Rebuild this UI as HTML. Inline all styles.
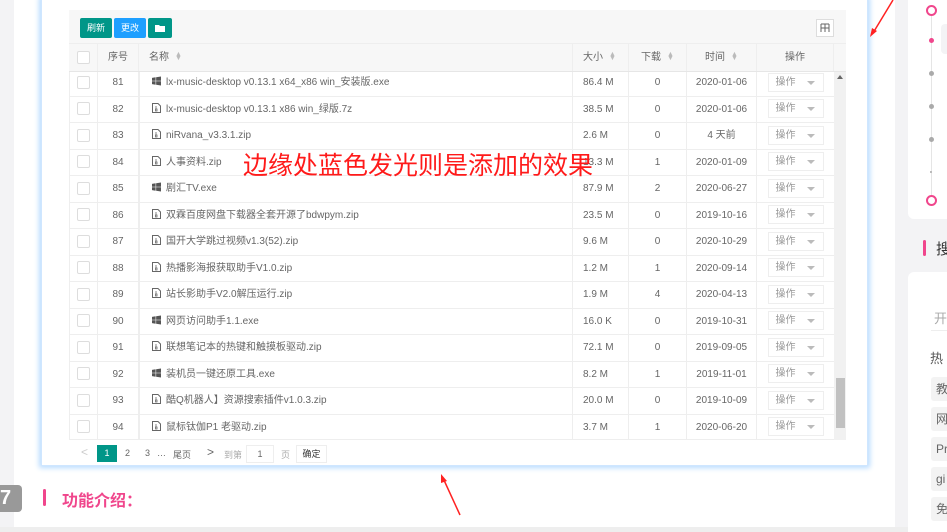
<!DOCTYPE html>
<html><head><meta charset="utf-8"><style>
*{margin:0;padding:0;box-sizing:border-box}
body{width:947px;height:532px;overflow:hidden;background:#f3f3f5;font-family:"Liberation Sans","Noto Sans CJK SC",sans-serif;position:relative;color:#666}
.abs{position:absolute}
.main{left:14px;top:0;width:881px;height:527px;background:#fff}
.frame{left:41px;top:-2px;width:827px;height:468px;background:#fff;box-shadow:0 0 5px 2px #b9dcff;border:1px solid #cfe6ff}
.tbl{left:69px;top:10px;width:777px;height:430px;background:#fff;border:1px solid #eee}
.toolbar{left:69px;top:10px;width:777px;height:34px;background:#f7f7f7;border-bottom:1px solid #eee}
.btn{position:absolute;top:8px;height:20px;color:#fff;font-size:9px;line-height:20px;text-align:center;border-radius:2px}
.hdr{left:69px;top:44px;width:777px;height:28px;background:#f7f7f7;border-bottom:1px solid #e6e6e6;font-size:10px;color:#666}
.hdr .cell{line-height:28px}
.cell{position:absolute;top:0;height:100%;border-right:1px solid #eee;white-space:nowrap;line-height:26px}
.c{text-align:center}
.sort{display:inline-block;margin-left:6px;color:#bbb;font-size:7px;line-height:4px;vertical-align:middle}
.body{left:69px;top:72px;width:765px;height:368px;overflow:hidden}
.row{position:absolute;left:0;width:765px;height:26.5px;border-bottom:1px solid #eee;font-size:10px;color:#666}
.cb{display:inline-block;vertical-align:middle;width:13px;height:13px;border:1px solid #ddd;border-radius:2px;background:#fff}
.op{display:inline-block;vertical-align:middle;width:56px;height:19px;border:1px solid #eee;background:#fff;font-size:10px;color:#999;line-height:18px;text-align:left;padding-left:7px;position:relative}
.op:after{content:"";position:absolute;right:8px;top:7px;border:4px solid transparent;border-top:4px solid #bbb;border-bottom:0}
.ico{display:inline-block;vertical-align:-1px;width:9px;height:10px;margin-right:5px;margin-left:12px}
</style></head><body>
<div class="abs main"></div>
<div class="abs frame"></div>
<div class="abs tbl"></div>
<div class="abs toolbar">
 <div class="btn" style="left:11px;width:32px;background:#009688">刷新</div>
 <div class="btn" style="left:45px;width:32px;background:#1e9fff">更改</div>
 <div class="btn" style="left:79px;width:24px;background:#009688"><svg width="10" height="8" viewBox="0 0 10 8" style="margin-top:6px"><path d="M0 1h4l1 1h5v6H0z" fill="#fff"/></svg></div>
 <div class="abs" style="left:747px;top:9px;width:18px;height:18px;border:1px solid #ddd;background:#fff"><svg width="16" height="16" viewBox="0 0 16 16"><path d="M4 4h8M4 4v8M8 4v8M12 4v8M4 8h8" stroke="#666" fill="none"/></svg></div>
</div>
<div class="abs hdr">
 <div class="cell c" style="left:0;width:29px"><div class="cb"></div></div>
 <div class="cell c" style="left:29px;width:41px">序号</div>
 <div class="cell" style="left:70px;width:434px;padding-left:10px">名称<span class="sort">▲<br>▼</span></div>
 <div class="cell" style="left:504px;width:56px;padding-left:10px">大小<span class="sort">▲<br>▼</span></div>
 <div class="cell c" style="left:560px;width:58px">下载<span class="sort">▲<br>▼</span></div>
 <div class="cell c" style="left:618px;width:70px">时间<span class="sort">▲<br>▼</span></div>
 <div class="cell c" style="left:688px;width:77px">操作</div>
</div>
<div class="abs body" id="b"></div>
<div class="abs" style="left:834px;top:72px;width:12px;height:368px;background:#f1f1f1"></div>
<div class="abs" style="left:836px;top:378px;width:9px;height:50px;background:#c1c1c1"></div>
<div class="abs" style="left:837px;top:75px;border:3px solid transparent;border-bottom:4px solid #666;border-top:0"></div>
<div class="abs" style="left:69px;top:440px;width:777px;height:26px;font-size:9px;color:#666">
 <span class="abs" style="left:12px;top:5px;color:#ccc;font-size:12px">&lt;</span>
 <span class="abs" style="left:28px;top:5px;width:20px;height:17px;background:#009688;color:#fff;text-align:center;line-height:17px">1</span>
 <span class="abs" style="left:56px;top:8px">2</span>
 <span class="abs" style="left:76px;top:8px">3</span>
 <span class="abs" style="left:88px;top:8px">…</span>
 <span class="abs" style="left:104px;top:8px">尾页</span>
 <span class="abs" style="left:138px;top:5px;font-size:12px">&gt;</span>
 <span class="abs" style="left:155px;top:8px;color:#aaa">到第</span>
 <span class="abs" style="left:177px;top:5px;width:28px;height:18px;border:1px solid #eee;text-align:center;line-height:16px">1</span>
 <span class="abs" style="left:212px;top:8px;color:#aaa">页</span>
 <span class="abs" style="left:227px;top:5px;width:31px;height:18px;border:1px solid #eee;text-align:center;line-height:16px;color:#333">确定</span>
</div>
<div class="abs" style="left:243px;top:146px;font-size:25px;color:#ff1a1a">边缘处蓝色发光则是添加的效果</div>
<svg class="abs" style="left:0;top:0" width="947" height="532"><path d="M893 0L873 33" stroke="#f22" stroke-width="1.5"/><path d="M870 37l2-9 5 3z" fill="#f22"/><path d="M460 515L443 478" stroke="#f22" stroke-width="1.5"/><path d="M441 474l6 7-6 2z" fill="#f22"/></svg>
<div class="abs" style="left:0;top:485px;width:22px;height:27px;background:#999;border-radius:0 4px 4px 0;color:#fff;font-weight:bold;font-size:20px;line-height:27px">7</div>
<div class="abs" style="left:43px;top:489px;width:3px;height:17px;background:#f0468c;border-radius:2px"></div>
<div class="abs" style="left:62px;top:487px;font-size:16px;font-weight:bold;color:#f0468c">功能介绍：</div>
<div class="abs" style="left:0;top:527px;width:947px;height:5px;background:#eee"></div>
<div class="abs" style="left:895px;top:0;width:52px;height:527px;background:#f3f3f5"></div>
<div class="abs" style="left:908px;top:0;width:39px;height:219px;background:#fff;border-radius:0 0 0 6px"></div>
<div class="abs" style="left:931px;top:14px;width:1px;height:190px;background:#e5e5e5"></div>
<div class="abs" style="left:926px;top:5px;width:11px;height:11px;border:2px solid #f0468c;border-radius:50%;background:#fff"></div>
<div class="abs" style="left:926px;top:195px;width:11px;height:11px;border:2px solid #f0468c;border-radius:50%;background:#fff"></div>
<div class="abs" style="left:929px;top:38px;width:5px;height:5px;background:#f0468c;border-radius:50%"></div>
<div class="abs" style="left:929px;top:71px;width:5px;height:5px;background:#aaa;border-radius:50%"></div>
<div class="abs" style="left:929px;top:104px;width:5px;height:5px;background:#aaa;border-radius:50%"></div>
<div class="abs" style="left:929px;top:137px;width:5px;height:5px;background:#aaa;border-radius:50%"></div>
<div class="abs" style="left:930px;top:171px;width:2px;height:2px;background:#bbb"></div>
<div class="abs" style="left:941px;top:24px;width:6px;height:30px;background:#f3f3f5;border-radius:4px 0 0 4px"></div>
<div class="abs" style="left:923px;top:240px;width:3px;height:16px;background:#f0468c;border-radius:2px"></div>
<div class="abs" style="left:936px;top:238px;font-size:15px;color:#333">搜</div>
<div class="abs" style="left:908px;top:272px;width:39px;height:260px;background:#fff;border-radius:6px 0 0 0"></div>
<div class="abs" style="left:934px;top:308px;font-size:13px;color:#aaa">开</div>
<div class="abs" style="left:931px;top:330px;width:16px;height:1px;background:#eee"></div>
<div class="abs" style="left:930px;top:348px;font-size:13px;color:#555">热</div>
<div id="tags"></div>
<script>
var t=["教","网","Pr","gi","免"],h="";
t.forEach(function(x,i){h+='<div class="abs" style="left:931px;top:'+(377+i*30)+'px;width:16px;height:24px;background:#f3f3f3;border-radius:3px 0 0 3px;font-size:12px;color:#666;line-height:24px;padding-left:5px;overflow:hidden">'+x+'</div>'});
document.getElementById("tags").innerHTML=h;
var rows=[
[81,"w","lx-music-desktop v0.13.1 x64_x86 win_安装版.exe","86.4 M",0,"2020-01-06"],
[82,"z","lx-music-desktop v0.13.1 x86 win_绿版.7z","38.5 M",0,"2020-01-06"],
[83,"z","niRvana_v3.3.1.zip","2.6 M",0,"4 天前"],
[84,"z","人事资料.zip","13.3 M",1,"2020-01-09"],
[85,"w","剧汇TV.exe","87.9 M",2,"2020-06-27"],
[86,"z","双霖百度网盘下载器全套开源了bdwpym.zip","23.5 M",0,"2019-10-16"],
[87,"z","国开大学跳过视频v1.3(52).zip","9.6 M",0,"2020-10-29"],
[88,"z","热播影海报获取助手V1.0.zip","1.2 M",1,"2020-09-14"],
[89,"z","站长影助手V2.0解压运行.zip","1.9 M",4,"2020-04-13"],
[90,"w","网页访问助手1.1.exe","16.0 K",0,"2019-10-31"],
[91,"z","联想笔记本的热键和触摸板驱动.zip","72.1 M",0,"2019-09-05"],
[92,"w","装机员一键还原工具.exe","8.2 M",1,"2019-11-01"],
[93,"z","酷Q机器人】资源搜索插件v1.0.3.zip","20.0 M",0,"2019-10-09"],
[94,"z","鼠标钛伽P1 老驱动.zip","3.7 M",1,"2020-06-20"]];
var win='<svg class="ico" viewBox="0 0 10 10"><path d="M0 1.5l4-.6V4.7H0zM4.6 .8L10 0v4.7H4.6zM0 5.3h4v3.8l-4-.6zM4.6 5.3H10V10l-5.4-.8z" fill="#555"/></svg>';
var zip='<svg class="ico" viewBox="0 0 9 10"><path d="M.5.5h5.5l2.5 2.5v6.5h-8z" fill="none" stroke="#666"/><path d="M4 3v3M3.5 6h1.5v2h-1.5z" stroke="#666" fill="none" stroke-width=".8"/></svg>';
var b="";
rows.forEach(function(r,i){
b+='<div class="row" style="top:'+(-2+i*26.5)+'px">'+
'<div class="cell c" style="left:0;width:29px"><div class="cb"></div></div>'+
'<div class="cell c" style="left:29px;width:41px">'+r[0]+'</div>'+
'<div class="cell" style="left:70px;width:434px;border-left:1px solid #eee">'+(r[1]=="w"?win:zip)+r[2]+'</div>'+
'<div class="cell" style="left:504px;width:56px;padding-left:10px">'+r[3]+'</div>'+
'<div class="cell c" style="left:560px;width:58px">'+r[4]+'</div>'+
'<div class="cell c" style="left:618px;width:70px">'+r[5]+'</div>'+
'<div class="cell c" style="left:688px;width:77px;border-right:0"><div class="op">操作</div></div></div>';});
document.getElementById("b").innerHTML=b;
</script>
</body></html>
